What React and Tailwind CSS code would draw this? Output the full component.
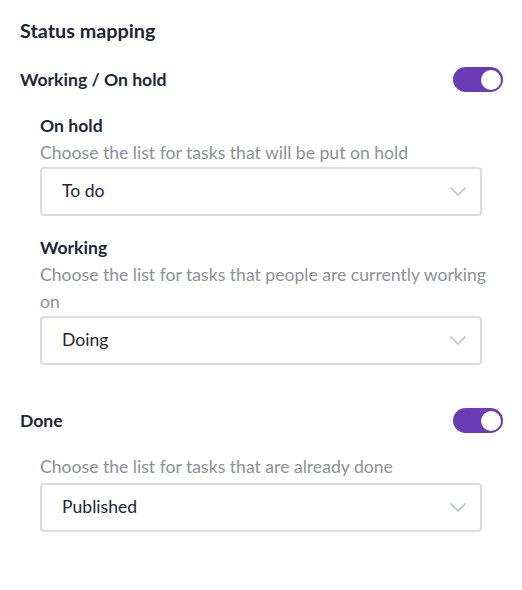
import React from "react";

function Toggle() {
  return (
    <div className="flex h-[25px] w-[50px] items-center justify-end rounded-full bg-[#6a3bb5] pr-[2px]">
      <div className="h-[20px] w-[20px] rounded-full bg-white" />
    </div>
  );
}

function Chevron() {
  return (
    <svg width="16" height="9" viewBox="0 0 16 9" fill="none">
      <path d="M1 1 L8 8 L15 1" stroke="#bfc1c4" strokeWidth="1.7" strokeLinecap="round" strokeLinejoin="round" />
    </svg>
  );
}

function Select({ value }) {
  return (
    <div className="flex h-[49px] w-[442px] items-center justify-between rounded-[4px] border-2 border-[#dcdcdc] pl-[20px] pr-[14px]">
      <span className="text-[17.6px] text-[#1c2733]">{value}</span>
      <Chevron />
    </div>
  );
}

export default function App() {
  return (
    <div
      className="min-h-[590px] w-[522px] bg-white pl-[20px] pr-[19px] pt-[17px] text-[#1c2733]"
      style={{ fontFamily: "Lato, 'Noto Sans', sans-serif" }}
    >
      <div className="text-[19.8px] font-bold leading-[26px]">Status mapping</div>

      <div className="mt-[24px] flex items-center justify-between">
        <div className="text-[17.6px] font-bold leading-[25px]">Working / On hold</div>
        <Toggle />
      </div>

      <div className="ml-[20px] mt-[21px]">
        <div className="text-[17.6px] font-bold leading-[26px]">On hold</div>
        <div className="text-[17.6px] leading-[27px] text-[#8c9198]">
          Choose the list for tasks that will be put on hold
        </div>
        <div className="mt-[1px]">
          <Select value="To do" />
        </div>

        <div className="mt-[19px] text-[17.6px] font-bold leading-[26px]">Working</div>
        <div className="w-[450px] text-[17.6px] leading-[27px] text-[#8c9198]">
          Choose the list for tasks that people are currently working on
        </div>
        <div className="mt-[1px]">
          <Select value="Doing" />
        </div>
      </div>

      <div className="mt-[43px] flex items-center justify-between">
        <div className="text-[17.6px] font-bold leading-[25px]">Done</div>
        <Toggle />
      </div>

      <div className="ml-[20px] mt-[21px]">
        <div className="text-[17.6px] leading-[26px] text-[#8c9198]">
          Choose the list for tasks that are already done
        </div>
        <div className="mt-[3px]">
          <Select value="Published" />
        </div>
      </div>
    </div>
  );
}
